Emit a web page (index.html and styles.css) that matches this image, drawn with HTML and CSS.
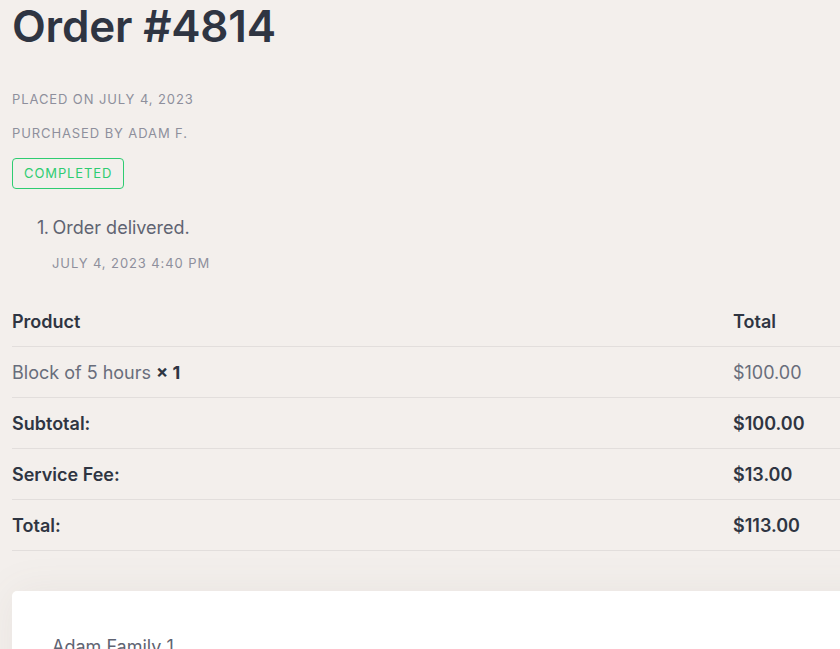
FILE: index.html
```html
<!DOCTYPE html>
<html lang="en">
<head>
<meta charset="utf-8">
<title>Order #4814</title>
<link rel="stylesheet" href="styles.css">
</head>
<body>
<div class="page">
  <h1 class="title">Order #4814</h1>
  <p class="meta meta-first">Placed on July 4, 2023</p>
  <p class="meta">Purchased by Adam F.</p>
  <span class="badge">Completed</span>
  <ol class="notes">
    <li class="note">
      <p class="note-text">Order delivered.</p>
      <p class="note-date">July 4, 2023 4:40 PM</p>
    </li>
  </ol>
  <div class="table">
    <div class="row head">
      <div class="cell">Product</div>
      <div class="cell">Total</div>
    </div>
    <div class="row">
      <div class="cell light">Block of 5 hours <strong>× 1</strong></div>
      <div class="cell light">$100.00</div>
    </div>
    <div class="row strong">
      <div class="cell">Subtotal:</div>
      <div class="cell">$100.00</div>
    </div>
    <div class="row strong">
      <div class="cell">Service Fee:</div>
      <div class="cell">$13.00</div>
    </div>
    <div class="row strong">
      <div class="cell">Total:</div>
      <div class="cell">$113.00</div>
    </div>
  </div>
  <div class="card">
    <p class="card-text">Adam Family 1</p>
  </div>
</div>
</body>
</html>
```

FILE: styles.css
```css
html, body {
  margin: 0;
  padding: 0;
  overflow: hidden;
}
body {
  background: #f3efec;
  font-family: "Inter", "DejaVu Sans", sans-serif;
  color: #5f6472;
}
.page {
  width: 900px;
  padding: 0 12px;
}
.title {
  margin: 0;
  font-size: 44px;
  line-height: 52px;
  font-weight: 600;
  color: #2f3542;
  letter-spacing: -0.2px;
}
.meta {
  margin: 0;
  font-size: 13px;
  line-height: 18px;
  letter-spacing: 0.9px;
  text-transform: uppercase;
  color: #8e8f9c;
  margin-bottom: 16px;
}
.meta-first {
  margin-top: 38px;
}
.badge {
  display: inline-block;
  border: 1px solid #2ecc71;
  border-radius: 4px;
  padding: 6px 11px;
  font-size: 13px;
  line-height: 17px;
  letter-spacing: 0.9px;
  text-transform: uppercase;
  color: #2ecc71;
}
.notes {
  margin: 27px 0 0;
  padding-left: 25px;
  list-style: none;
  counter-reset: note;
  font-size: 18px;
  color: #5f6472;
}
.note {
  counter-increment: note;
}
.note-text {
  margin: 0;
  line-height: 24px;
}
.note-text::before {
  content: counter(note) ".";
  margin-right: 4px;
  letter-spacing: -0.5px;
}
.note-date {
  margin: 14px 0 0 15px;
  font-size: 13px;
  line-height: 18px;
  letter-spacing: 0.9px;
  text-transform: uppercase;
  color: #8e8f9c;
}
.table {
  margin-top: 24px;
}
.row {
  display: grid;
  grid-template-columns: 721px 1fr;
  border-bottom: 1px solid #e2dedc;
  height: 50px;
  align-items: center;
  font-size: 18px;
}
.head .cell, .strong .cell {
  font-weight: 600;
  color: #2f3542;
}
.cell.light {
  color: #686d7b;
}
.cell strong {
  font-weight: 700;
  color: #2f3542;
}
.card {
  margin-top: 40px;
  background: #ffffff;
  border-radius: 5px;
  box-shadow: 0 0 40px rgba(120, 100, 90, 0.08);
  padding: 45px 40px;
  height: 200px;
}
.card-text {
  margin: 0;
  font-size: 18px;
  color: #5f6472;
}
```
